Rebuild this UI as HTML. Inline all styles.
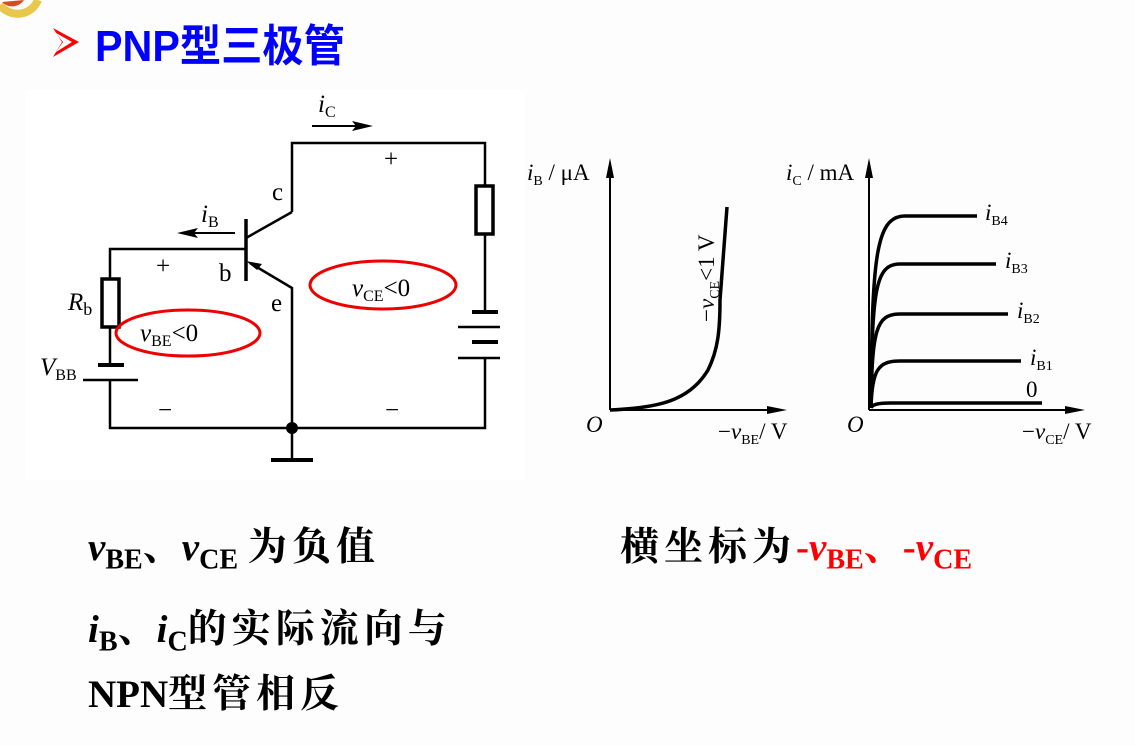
<!DOCTYPE html>
<html><head><meta charset="utf-8"><style>
html,body{margin:0;padding:0;width:1135px;height:745px;overflow:hidden;background:#fdfdfd}
svg{position:absolute;left:0;top:0}
.t{position:absolute;font-family:"Liberation Serif","Noto Serif CJK SC",serif;font-weight:bold;color:#000;white-space:nowrap;font-size:39px}
.t .c{letter-spacing:5px}
.t sub{font-size:0.72em;vertical-align:-0.3em;letter-spacing:0}
.r{color:#f00}
</style></head><body>
<svg width="1135" height="745" viewBox="0 0 1135 745" font-family="Liberation Serif, serif">
<path d="M0,5 A22,22 0 0 0 38,0" fill="none" stroke="#e8c84a" stroke-width="8"/><path d="M2,2 A14,14 0 0 0 24,0" fill="#d84a20"/>
<rect x="25" y="90" width="500" height="390" fill="#fff"/>
<polygon points="53,28 79,42 53,57 62,42" fill="#f00"/><polygon points="56,33 72,42 56,52 63,42" fill="#fff"/>
<text x="95" y="61" font-family="Liberation Sans, Noto Sans CJK SC, sans-serif" font-size="44" fill="#0000ff" font-weight="bold" textLength="250" lengthAdjust="spacingAndGlyphs">PNP型三极管</text>
<g stroke="#000" stroke-width="2.5" fill="none">
<polyline points="292,212 292,143 485,143 485,186"/>
<rect x="476" y="186" width="17" height="48" stroke-width="3.5"/>
<line x1="485" y1="234" x2="485" y2="312"/>
<line x1="292" y1="212" x2="246" y2="238"/>
<line x1="246" y1="219" x2="246" y2="281" stroke-width="3.5"/>
<polyline points="246,249 110,249 110,279"/>
<rect x="102" y="279" width="17" height="48" stroke-width="3.5"/>
<line x1="110" y1="327" x2="110" y2="365"/>
<line x1="98" y1="365" x2="124" y2="365" stroke-width="4"/>
<line x1="83" y1="380" x2="138" y2="380"/>
<polyline points="110,380 110,428 485,428 485,358"/>
<line x1="472" y1="312" x2="498" y2="312" stroke-width="4"/>
<line x1="458" y1="327" x2="500" y2="327"/>
<line x1="472" y1="342" x2="498" y2="342" stroke-width="4"/>
<line x1="458" y1="358" x2="500" y2="358"/>
<polyline points="250,263 292,288 292,428"/>
<line x1="292" y1="428" x2="292" y2="460"/>
<line x1="271" y1="460" x2="313" y2="460" stroke-width="4"/>
<line x1="312" y1="126" x2="360" y2="126" stroke-width="2"/>
<line x1="190" y1="233" x2="235" y2="233" stroke-width="2"/>
</g>
<circle cx="292" cy="428" r="6" fill="#000"/>
<polygon points="373,126 352,121 356,126 352,131" fill="#000"/>
<polygon points="177,233 198,228 194,233 198,238" fill="#000"/>
<polygon points="246,261 262,264 257,270" fill="#000"/>
<g font-size="25" fill="#000">
<text x="318" y="112" font-style="italic">i<tspan font-size="16" font-style="normal" dy="5">C</tspan></text>
<text x="384" y="167">+</text>
<text x="272" y="200">c</text>
<text x="201" y="222" font-style="italic">i<tspan font-size="16" font-style="normal" dy="5">B</tspan></text>
<text x="156" y="274">+</text>
<text x="219" y="281">b</text>
<text x="271" y="311">e</text>
<text x="68" y="310" font-style="italic">R<tspan font-size="18" font-style="normal" dy="5">b</tspan></text>
<text x="40" y="375" font-style="italic">V<tspan font-size="16" font-style="normal" dy="5">BB</tspan></text>
<text x="158" y="418">−</text>
<text x="385" y="418">−</text>
<text x="352" y="296" font-style="italic">v<tspan font-size="16" font-style="normal" dy="5">CE</tspan><tspan font-style="normal" dy="-5">&lt;0</tspan></text>
<text x="140" y="341" font-style="italic">v<tspan font-size="16" font-style="normal" dy="5">BE</tspan><tspan font-style="normal" dy="-5">&lt;0</tspan></text>
</g>
<ellipse cx="383" cy="285" rx="73" ry="24" fill="none" stroke="#e00" stroke-width="3"/>
<ellipse cx="188" cy="333" rx="72" ry="23" fill="none" stroke="#e00" stroke-width="3"/>
<g stroke="#000" stroke-width="2" fill="none">
<polyline points="610,410 610,165"/><polyline points="610,410 780,410"/>
<polyline points="869,410 869,165"/><polyline points="869,410 1078,410"/>
</g>
<polygon points="610,158 606,178 614,178" fill="#000"/>
<polygon points="787,410 767,406 767,414" fill="#000"/>
<polygon points="869,158 865,178 873,178" fill="#000"/>
<polygon points="1085,410 1065,406 1065,414" fill="#000"/>
<g stroke="#000" stroke-width="3.5" fill="none">
<path d="M610,410 C660,408 690,400 708,370 C718,350 720,330 720,300 L727,207"/>
<path d="M871,408 C872,260 875,216 905,216 L977,216"/>
<path d="M871,408 C872,290 875,264 900,264 L996,264"/>
<path d="M871,408 C872,330 876,314 900,314 L1008,314"/>
<path d="M871,408 C872,370 878,361 900,361 L1021,361"/>
<path d="M871,408 C872,405 876,403 890,403 L1042,403"/>
</g>
<g font-size="23" fill="#000">
<text x="527" y="180" font-style="italic">i<tspan font-size="14" font-style="normal" dy="5">B</tspan><tspan font-style="normal" dy="-5"> / μA</tspan></text>
<text x="786" y="180" font-style="italic">i<tspan font-size="14" font-style="normal" dy="5">C</tspan><tspan font-style="normal" dy="-5"> / mA</tspan></text>
<text x="586" y="432" font-style="italic">O</text>
<text x="847" y="432" font-style="italic">O</text>
<text x="718" y="439">−<tspan font-style="italic">v</tspan><tspan font-size="14" dy="5">BE</tspan><tspan dy="-5">/ V</tspan></text>
<text x="1022" y="439">−<tspan font-style="italic">v</tspan><tspan font-size="14" dy="5">CE</tspan><tspan dy="-5">/ V</tspan></text>
<text transform="translate(714,322) rotate(-90)">−<tspan font-style="italic">v</tspan><tspan font-size="14" dy="5">CE</tspan><tspan dy="-5">&lt;1 V</tspan></text>
<text x="985" y="220" font-style="italic">i<tspan font-size="14" font-style="normal" dy="5">B4</tspan></text>
<text x="1005" y="268" font-style="italic">i<tspan font-size="14" font-style="normal" dy="5">B3</tspan></text>
<text x="1017" y="318" font-style="italic">i<tspan font-size="14" font-style="normal" dy="5">B2</tspan></text>
<text x="1030" y="365" font-style="italic">i<tspan font-size="14" font-style="normal" dy="5">B1</tspan></text>
<text x="1026" y="397">0</text>
</g>
</svg>
<div class="t" style="left:88px;top:516px"><i>v</i><sub>BE</sub>、<i>v</i><sub>CE</sub> <span class="c">为负值</span></div>
<div class="t" style="left:620px;top:516px"><span class="c">横坐标为</span><span class="r">-<i>v</i><sub>BE</sub>、-<i>v</i><sub>CE</sub></span></div>
<div class="t" style="left:88px;top:598px"><i>i</i><sub>B</sub>、<i>i</i><sub>C</sub><span class="c">的实际流向与</span></div>
<div class="t" style="left:88px;top:663px">NPN<span class="c">型管相反</span></div>
</body></html>
